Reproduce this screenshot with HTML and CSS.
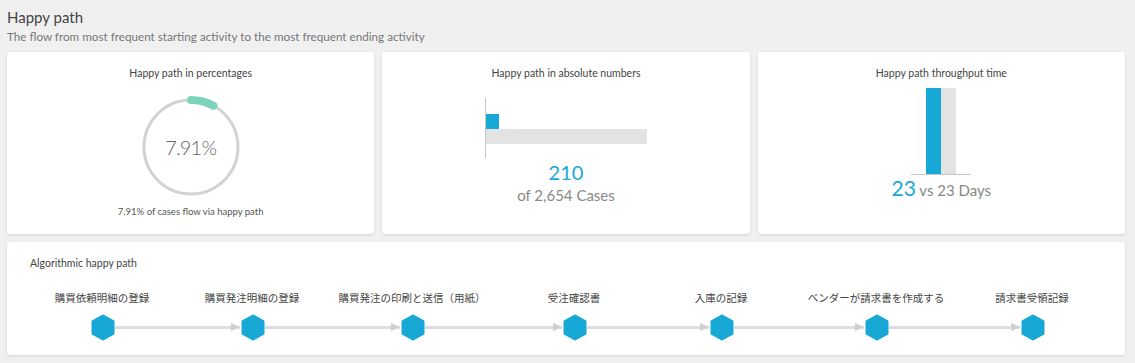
FILE: index.html
```html
<!DOCTYPE html>
<html lang="en">
<head>
    <meta charset="UTF-8">
    <title>Happy path</title>
    <link rel="stylesheet" href="styles.css">
</head>
<body>
    <!-- Header -->
    <div class="page-head">
        <h1>Happy path</h1>
        <p>The flow from most frequent starting activity to the most frequent ending activity</p>
    </div>

    <!-- KPI cards -->
    <div class="kpi-row">
        <div class="card">
            <h3 class="card-title">Happy path in percentages</h3>
            <div class="donut">
                <svg width="104" height="104" viewBox="0 0 104 104">
                    <circle cx="52" cy="52" r="47" fill="none" stroke="#d2d2d2" stroke-width="3"/>
                    <circle cx="52" cy="52" r="47" fill="none" stroke="#7bd3bb" stroke-width="8"
                            stroke-linecap="round" stroke-dasharray="23.4 300"
                            transform="rotate(-90 52 52)"/>
                </svg>
                <span class="donut-value">7.91%</span>
            </div>
            <p class="caption">7.91% of cases flow via happy path</p>
        </div>

        <div class="card">
            <h3 class="card-title">Happy path in absolute numbers</h3>
            <div class="hbar-chart">
                <div class="hbar blue" style="width: 13px"></div>
                <div class="hbar grey" style="width: 161px"></div>
            </div>
            <div class="big-number">210</div>
            <div class="sub-number">of 2,654 Cases</div>
        </div>

        <div class="card">
            <h3 class="card-title">Happy path throughput time</h3>
            <div class="vbar-chart">
                <div class="vbar blue" style="height: 86px"></div>
                <div class="vbar grey" style="height: 86px"></div>
            </div>
            <div class="days"><span class="big-number">23</span> vs 23 Days</div>
        </div>
    </div>

    <!-- Algorithmic happy path -->
    <div class="card path-card">
        <h3 class="path-title">Algorithmic happy path</h3>
        <div class="steps">
            <div class="step first">
                <span class="step-label">購買依頼明細の登録</span>
                <div class="track"><span class="line in"></span><svg class="node" viewBox="0 0 24 27"><polygon points="12,2 22,7.5 22,19.5 12,25 2,19.5 2,7.5"/></svg><span class="line out"></span></div>
            </div>
            <div class="step">
                <span class="step-label">購買発注明細の登録</span>
                <div class="track"><span class="line in"></span><svg class="node" viewBox="0 0 24 27"><polygon points="12,2 22,7.5 22,19.5 12,25 2,19.5 2,7.5"/></svg><span class="line out"></span></div>
            </div>
            <div class="step">
                <span class="step-label">購買発注の印刷と送信（用紙）</span>
                <div class="track"><span class="line in"></span><svg class="node" viewBox="0 0 24 27"><polygon points="12,2 22,7.5 22,19.5 12,25 2,19.5 2,7.5"/></svg><span class="line out"></span></div>
            </div>
            <div class="step">
                <span class="step-label">受注確認書</span>
                <div class="track"><span class="line in"></span><svg class="node" viewBox="0 0 24 27"><polygon points="12,2 22,7.5 22,19.5 12,25 2,19.5 2,7.5"/></svg><span class="line out"></span></div>
            </div>
            <div class="step">
                <span class="step-label">入庫の記録</span>
                <div class="track"><span class="line in"></span><svg class="node" viewBox="0 0 24 27"><polygon points="12,2 22,7.5 22,19.5 12,25 2,19.5 2,7.5"/></svg><span class="line out"></span></div>
            </div>
            <div class="step">
                <span class="step-label">ベンダーが請求書を作成する</span>
                <div class="track"><span class="line in"></span><svg class="node" viewBox="0 0 24 27"><polygon points="12,2 22,7.5 22,19.5 12,25 2,19.5 2,7.5"/></svg><span class="line out"></span></div>
            </div>
            <div class="step last">
                <span class="step-label">請求書受領記録</span>
                <div class="track"><span class="line in"></span><svg class="node" viewBox="0 0 24 27"><polygon points="12,2 22,7.5 22,19.5 12,25 2,19.5 2,7.5"/></svg><span class="line out"></span></div>
            </div>
        </div>
    </div>
</body>
</html>
```

FILE: styles.css
```css
* {
    margin: 0;
    padding: 0;
    box-sizing: border-box;
}

body {
    background-color: #f0f0f0;
    color: #444;
    font-family: Lato, "Noto Sans CJK JP", sans-serif;
    padding: 8px 10px 8px 7px;
}

/* Header */
.page-head h1 {
    font-size: 15px;
    font-weight: 400;
    color: #444;
    line-height: 18px;
}

.page-head p {
    font-size: 11.7px;
    color: #777;
    line-height: 16px;
    margin-top: 2px;
}

/* Cards */
.card {
    background-color: #fff;
    border-radius: 3px;
    box-shadow: 0 1px 3px rgba(0, 0, 0, 0.12);
}

.kpi-row {
    display: grid;
    grid-template-columns: repeat(3, 1fr);
    gap: 8px;
    margin-top: 8px;
}

.kpi-row .card {
    height: 182px;
    display: flex;
    flex-direction: column;
    align-items: center;
    padding-top: 14px;
}

.card-title {
    font-size: 10.5px;
    font-weight: 400;
    line-height: 14px;
    color: #444;
}

/* Donut */
.donut {
    position: relative;
    width: 104px;
    height: 104px;
    margin-top: 15px;
}

.donut svg {
    display: block;
}

.donut-value {
    position: absolute;
    inset: 0;
    display: flex;
    align-items: center;
    justify-content: center;
    font-size: 20px;
    font-weight: 300;
    letter-spacing: -0.8px;
    color: #666;
}

.caption {
    font-size: 9.5px;
    line-height: 14px;
    color: #555;
    margin-top: 6px;
}

/* Horizontal bars */
.hbar-chart {
    width: 162px;
    height: 60px;
    border-left: 1px solid #c8c8c8;
    padding-top: 16px;
    margin-top: 18px;
}

.hbar {
    height: 15px;
}

.blue {
    background-color: #17a8d6;
}

.grey {
    background-color: #e3e3e3;
}

.big-number {
    font-size: 20px;
    font-weight: 400;
    line-height: 22px;
    color: #17a8d6;
    margin-top: 3px;
}

.sub-number {
    font-size: 15px;
    line-height: 18px;
    color: #888;
    margin-top: 3px;
}

/* Vertical bars */
.vbar-chart {
    width: 60px;
    height: 88px;
    display: flex;
    justify-content: center;
    align-items: flex-end;
    border-bottom: 1px solid #c8c8c8;
    margin-top: 7px;
}

.vbar {
    width: 15px;
}

.days {
    font-size: 15px;
    color: #888;
    line-height: 22px;
    margin-top: 2px;
}

.days .big-number {
    font-size: 21px;
    margin: 0;
}

/* Algorithmic happy path */
.path-card {
    margin-top: 8px;
    height: 113px;
    padding: 14px 20px 0 20px;
}

.path-title {
    font-size: 10.5px;
    font-weight: 400;
    line-height: 14px;
    color: #444;
    padding-left: 3px;
}

.steps {
    display: grid;
    grid-template-columns: 150px 150px 170px 154px 140px 170px 142px;
    margin-top: 21px;
}

.step {
    display: flex;
    flex-direction: column;
    align-items: center;
}

.step-label {
    font-size: 10.5px;
    line-height: 14px;
    color: #444;
    white-space: nowrap;
}

.track {
    display: flex;
    align-items: center;
    width: 100%;
    margin-top: 9px;
}

.line {
    flex: 1;
    height: 3px;
    background-color: #dedede;
    position: relative;
}

.line.in {
    margin-right: 1px;
}

/* arrow head at the end of the incoming line */
.line.in::after {
    content: "";
    position: absolute;
    right: 0;
    top: -3px;
    border-left: 9px solid #cfcfcf;
    border-top: 4.5px solid transparent;
    border-bottom: 4.5px solid transparent;
}

.first .line.in,
.last .line.out {
    visibility: hidden;
}

.node {
    width: 24px;
    height: 27px;
    display: block;
}

.node polygon {
    fill: #17a8d6;
    stroke: #17a8d6;
    stroke-width: 3;
    stroke-linejoin: round;
}
```
